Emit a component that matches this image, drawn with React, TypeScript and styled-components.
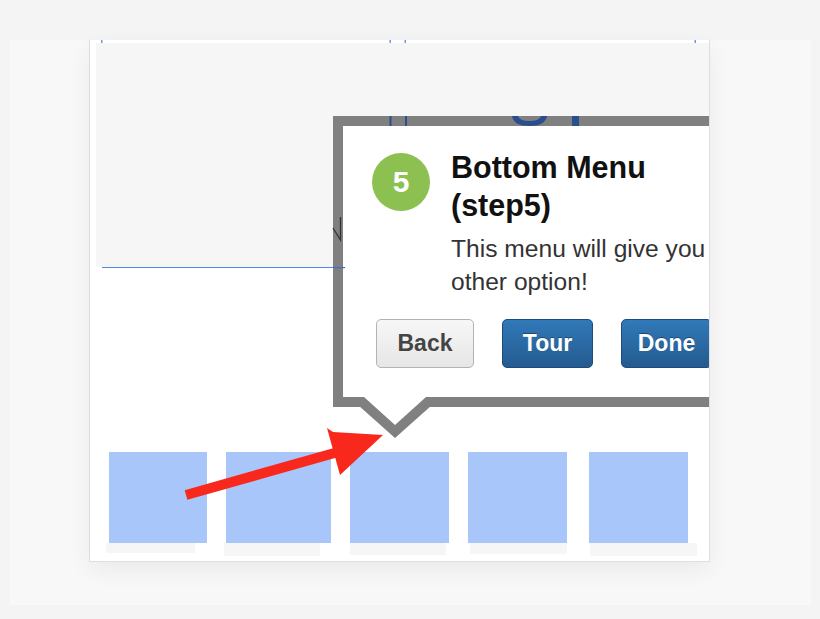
import React from "react";
import styled, { createGlobalStyle } from "styled-components";

const GlobalStyle = createGlobalStyle`
  body {
    margin: 0;
    background: #f4f4f4;
    font-family: "Liberation Sans", Arial, sans-serif;
  }
`;

const Page = styled.div`
  padding: 40px 9px 14px 10px;
`;

const Frame = styled.div`
  height: 565px;
  background: #f8f8f8;
  padding-left: 79px;
`;

const Card = styled.div`
  position: relative;
  box-sizing: border-box;
  width: 621px;
  height: 522px;
  background: #fff;
  border: 1px solid #dedede;
  border-top: 0;
  overflow: hidden;
  box-shadow: 0 8px 22px rgba(0, 0, 0, 0.06);
`;

const TopStrip = styled.div`
  height: 3px;
`;

const Screen = styled.div`
  height: 224px;
  margin-left: 6px;
  background: #f6f6f6;
`;

const Divider = styled.div`
  height: 1px;
  width: 243px;
  margin-left: 12px;
  background: #4f88e2;
`;

const TabBar = styled.div`
  display: flex;
  gap: 19px;
  margin-top: 184px;
  padding-left: 19px;
`;

const Tab = styled.div<{ $w: number; $shift: number }>`
  width: ${(p) => p.$w}px;
  margin-left: ${(p) => p.$shift}px;
  display: flex;
  flex-direction: column;
`;

const TabIcon = styled.div`
  height: 91px;
  background: #a8c6fa;
`;

const TabLabel = styled.div<{ $dx: number; $w: number; $h: number }>`
  margin-left: ${(p) => p.$dx}px;
  width: ${(p) => p.$w}px;
  height: ${(p) => p.$h}px;
  background: #f6f6f6;
`;

const Popup = styled.div`
  position: absolute;
  left: 243px;
  top: 76px;
  width: 420px;
  padding: 23px 0 29px 29px;
  background: #fff;
  border: 10px solid #808080;

  &::before,
  &::after {
    content: "";
    position: absolute;
    top: 100%;
    width: 0;
    height: 0;
    border-style: solid;
    border-color: transparent;
  }
  &::before {
    left: 6px;
    border-width: 41px 46px 0 46px;
    border-top-color: #808080;
  }
  &::after {
    left: 21px;
    border-width: 28px 31px 0 31px;
    border-top-color: #fff;
  }
`;

const Header = styled.div`
  display: flex;
  align-items: flex-start;
  gap: 21px;
`;

const StepBadge = styled.div`
  flex: none;
  width: 58px;
  height: 58px;
  margin-top: 4px;
  border-radius: 50%;
  background: #8cc152;
  color: #fff;
  font-weight: bold;
  font-size: 30px;
  display: flex;
  align-items: center;
  justify-content: center;
`;

const Column = styled.div`
  display: flex;
  flex-direction: column;
  gap: 8px;
`;

const Title = styled.h3`
  margin: 0;
  font-size: 30.5px;
  line-height: 37.5px;
  font-weight: bold;
  color: #111;
`;

const Body = styled.p`
  margin: 0;
  width: 265px;
  font-size: 24.6px;
  line-height: 33px;
  color: #333;
`;

const Buttons = styled.div`
  display: flex;
  gap: 28px;
  margin: 21px 0 0 4px;
`;

const Button = styled.button<{ $primary?: boolean; $w: number }>`
  box-sizing: border-box;
  width: ${(p) => p.$w}px;
  height: 49px;
  padding: 0;
  border-radius: 5px;
  font-family: inherit;
  font-size: 23px;
  font-weight: bold;
  border: 1px solid ${(p) => (p.$primary ? "#1e4b78" : "#b3b3b3")};
  color: ${(p) => (p.$primary ? "#fff" : "#444")};
  background: ${(p) =>
    p.$primary
      ? "linear-gradient(#3179b8, #245b90)"
      : "linear-gradient(#f7f7f7, #e6e6e6)"};
  text-shadow: ${(p) => (p.$primary ? "0 -1px 0 rgba(0,0,0,0.35)" : "none")};
`;

const Overlay = styled.svg`
  position: absolute;
  left: 0;
  top: 0;
  pointer-events: none;
`;

const tabs = [
  { w: 98, shift: 0, dx: -3, lw: 89, lh: 10 },
  { w: 105, shift: 0, dx: -2, lw: 96, lh: 13 },
  { w: 99, shift: 0, dx: 0, lw: 96, lh: 12 },
  { w: 99, shift: 0, dx: 2, lw: 97, lh: 11 },
  { w: 99, shift: 3, dx: 1, lw: 107, lh: 13 },
];

export default function App() {
  return (
    <>
      <GlobalStyle />
      <Page>
        <Frame>
          <Card>
            <TopStrip />
            <Screen />
            <Divider />
            <TabBar>
              {tabs.map((t, i) => (
                <Tab key={i} $w={t.w} $shift={t.shift}>
                  <TabIcon />
                  <TabLabel $dx={t.dx} $w={t.lw} $h={t.lh} />
                </Tab>
              ))}
            </TabBar>

            <Popup>
              <Header>
                <StepBadge>5</StepBadge>
                <Column>
                  <Title>
                    Bottom Menu
                    <br />
                    (step5)
                  </Title>
                  <Body>This menu will give you other option!</Body>
                </Column>
              </Header>
              <Buttons>
                <Button $w={98}>Back</Button>
                <Button $primary $w={91}>
                  Tour
                </Button>
                <Button $primary $w={91}>
                  Done
                </Button>
              </Buttons>
            </Popup>

            <Overlay width="620" height="522" viewBox="90 40 620 522">
              {/* bits of the screen behind, showing through */}
              <g fill="#6b9be0">
                <rect x="101" y="40" width="1.5" height="3" />
                <rect x="389.5" y="40" width="1.5" height="3" />
                <rect x="404.5" y="40" width="1.5" height="3" />
                <rect x="694.5" y="40" width="1.5" height="3" />
              </g>
              <g fill="#2b4f8e">
                <rect x="389.5" y="116" width="2" height="10" />
                <rect x="405" y="116" width="2" height="10" />
                <rect x="572" y="116" width="7" height="10" />
                <path d="M512 116 Q513.5 126 529.5 126 Q545.5 126 547 116 L541 116 Q539.5 121 529.5 121 Q519.5 121 518 116 Z" />
              </g>
              <rect x="333" y="267" width="12" height="1.2" fill="#3b6fc6" />
              <path
                d="M333 228 L340.5 240 L340.5 217"
                fill="none"
                stroke="#333"
                strokeWidth="1.3"
              />
              {/* red pointer arrow */}
              <path d="M186 495 L338 452" stroke="#f9281c" strokeWidth="10" />
              <polygon
                points="327,428 333,432 383,435 340,475"
                fill="#f9281c"
              />
            </Overlay>
          </Card>
        </Frame>
      </Page>
    </>
  );
}
